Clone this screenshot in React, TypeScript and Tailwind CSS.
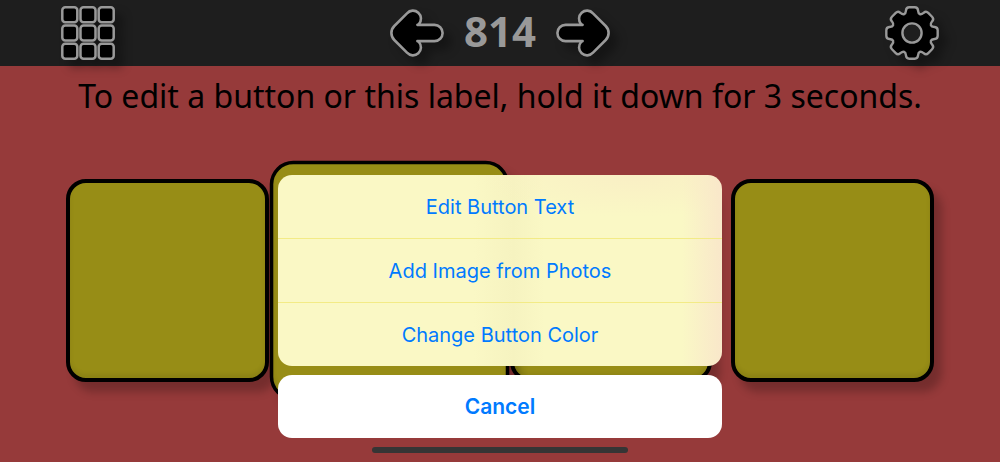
import React from 'react';

const GEAR_TEETH = 8;

// Rounded eight-tooth outline, centred on 0,0
const buildGearPath = () => {
  const points: [number, number][] = [];
  for (let i = 0; i < GEAR_TEETH; i++) {
    const base = (i * 360) / GEAR_TEETH;
    [[26.3, -12.5], [26.3, 12.5], [20.5, 18], [20.5, 27]].forEach(([radius, angle]) => {
      const rad = ((base + angle - 90) * Math.PI) / 180;
      points.push([radius * Math.cos(rad), radius * Math.sin(rad)]);
    });
  }
  const towards = (from: [number, number], to: [number, number]) => {
    const length = Math.hypot(to[0] - from[0], to[1] - from[1]);
    const t = Math.min(3 / length, 0.5);
    return `${from[0] + (to[0] - from[0]) * t} ${from[1] + (to[1] - from[1]) * t}`;
  };
  const corners = points.map((point, i) => {
    const prev = points[(i + points.length - 1) % points.length];
    const next = points[(i + 1) % points.length];
    return `${i === 0 ? 'M' : 'L'}${towards(point, prev)} Q${point[0]} ${point[1]} ${towards(point, next)}`;
  });
  return `${corners.join(' ')} Z`;
};

const gearPath = buildGearPath();

const GridIcon: React.FC = () => (
  <svg width="54" height="54" viewBox="0 0 54 54" fill="#000" stroke="#999" strokeWidth="2.5" aria-hidden="true">
    {[1.3, 19.5, 37.7].map((y) =>
      [1.3, 19.5, 37.7].map((x) => <rect key={`${x}-${y}`} x={x} y={y} width="15" height="15" rx="3" />)
    )}
  </svg>
);

const ArrowIcon: React.FC<{ flipped?: boolean }> = ({ flipped }) => (
  <svg
    width="54"
    height="50"
    viewBox="1 0 54 50"
    fill="#000"
    stroke="#999"
    strokeWidth="2.6"
    strokeLinejoin="round"
    className={flipped ? '-scale-x-100' : ''}
    aria-hidden="true"
  >
    <path d="M28.4 16.9H45.5a8.1 8.1 0 0 1 0 16.2H28.4L29.9 34A8 8 0 0 1 18 44.7L5.3 32a9.9 9.9 0 0 1 0-14L18 5.3A8 8 0 0 1 29.9 16Z" />
  </svg>
);

const GearIcon: React.FC = () => (
  <svg width="54" height="56" viewBox="-27 -28 54 56" stroke="#999" strokeWidth="2.4" aria-hidden="true">
    <path d={gearPath} fill="#000" strokeLinejoin="round" />
    <circle r="9.6" fill="#1e1e1e" />
  </svg>
);

interface IconButtonProps {
  label: string;
  children: React.ReactNode;
}

const IconButton: React.FC<IconButtonProps> = ({ label, children }) => (
  <button type="button" aria-label={label} className="drop-shadow-[8px_8px_5px_rgba(0,0,0,0.3)]">
    {children}
  </button>
);

const Tile: React.FC<{ label: string; selected?: boolean }> = ({ label, selected }) => (
  <button
    type="button"
    aria-label={label}
    className={`aspect-square rounded-[20px] border-black bg-[#978d16] shadow-[8px_10px_8px_rgba(0,0,0,0.22),inset_0_-4px_4px_rgba(0,0,0,0.08)] ${
      selected ? 'relative z-10 scale-118 border-[3px]' : 'border-4'
    }`}
  />
);

const sheetActions = ['Edit Button Text', 'Add Image from Photos', 'Change Button Color'];

const ActionSheet: React.FC = () => (
  <div
    role="dialog"
    aria-label="Button options"
    className="absolute inset-0 z-20 flex flex-col items-center justify-end pb-[9px] font-[Inter,sans-serif] text-[#007aff]"
  >
    <div className="mb-[9px] flex w-full max-w-[444px] flex-col divide-y divide-[#f3eb86] overflow-hidden rounded-[14px] bg-[#faf8c5] bg-[linear-gradient(to_left,#f9e7ca,#f9e7ca00_9%),radial-gradient(ellipse_35%_22%_at_80%_0%,#f9efc5,#f9efc500),linear-gradient(to_right,#f6f3c000_44%,#f6f3c0_53%,#f6f3c000_60%)]">
      {sheetActions.map((action) => (
        <button key={action} type="button" className="h-16 text-[20px] last:h-[63px]">
          {action}
        </button>
      ))}
    </div>
    <button type="button" className="mb-[9px] h-[63px] w-full max-w-[444px] rounded-[14px] bg-white text-[21px] font-semibold">
      Cancel
    </button>
    <div className="h-[6px] w-64 rounded-full bg-[#353535]" />
  </div>
);

const App: React.FC = () => {
  return (
    <div className="relative flex min-h-screen flex-col overflow-hidden bg-[#963a3a]">
      <header className="relative z-10 flex h-[66px] items-center justify-between bg-[#1e1e1e] px-[61px]">
        <IconButton label="Levels">
          <GridIcon />
        </IconButton>
        <div className="flex items-center gap-5">
          <IconButton label="Previous">
            <ArrowIcon />
          </IconButton>
          <h1 className="pb-1 font-['Noto_Sans',sans-serif] text-[42px] leading-none font-bold text-[#999]">814</h1>
          <IconButton label="Next">
            <ArrowIcon flipped />
          </IconButton>
        </div>
        <IconButton label="Settings">
          <GearIcon />
        </IconButton>
      </header>
      <main className="flex flex-col">
        <p className="pt-1.5 text-center font-['Noto_Sans',sans-serif] text-[32px] leading-[48px] text-black">
          To edit a button or this label, hold it down for 3 seconds.
        </p>
        <div className="mt-[59px] grid grid-cols-4 gap-[19px] px-[66px]">
          <Tile label="Button 1" />
          <Tile label="Button 2" selected />
          <Tile label="Button 3" />
          <Tile label="Button 4" />
        </div>
      </main>
      <ActionSheet />
    </div>
  );
};

export default App;
